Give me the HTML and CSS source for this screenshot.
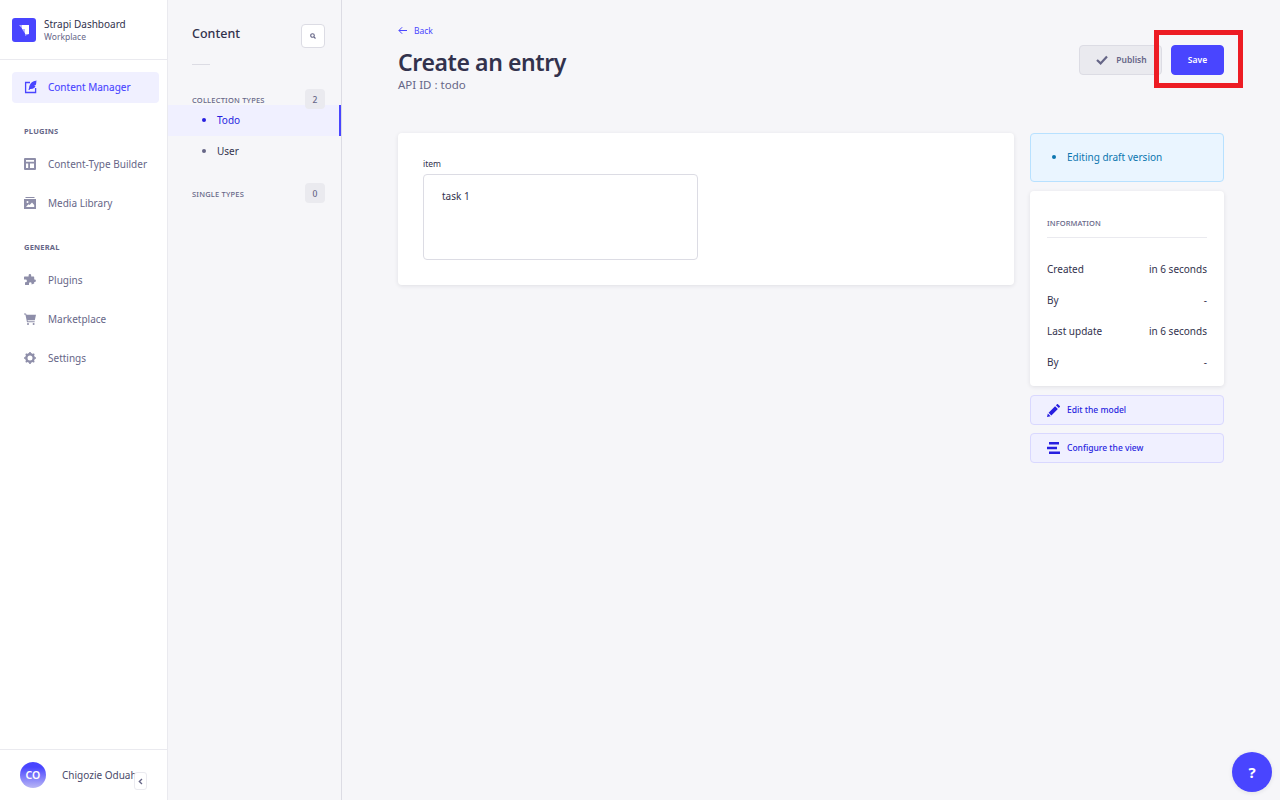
FILE: index.html
```html
<!DOCTYPE html>
<html lang="en">
<head>
  <meta charset="UTF-8" />
  <title>Create an entry</title>
  <link rel="stylesheet" href="styles.css">
</head>
<body>

  <aside class="sidebar">
    <div class="brand">
      <div class="brand-logo">
        <svg viewBox="0 0 24 24" width="24" height="24">
          <path d="M10 7h7v9h-4v-5h-3z" fill="#fff"/>
          <path d="M7 7h3v3.5zM10 11h3v4.5z" fill="#fff" opacity="0.6"/>
          <path d="M13 16h4l-4 2z" fill="#fff" opacity="0.5"/>
        </svg>
      </div>
      <div>
        <div class="brand-name">Strapi Dashboard</div>
        <div class="brand-sub">Workplace</div>
      </div>
    </div>

    <nav class="main-nav">
      <a class="nav-item active" href="#">
        <svg viewBox="0 0 14 14" width="14" height="14" fill="none">
          <path d="M6 2.5H1.6v10h10V8" stroke="#4945ff" stroke-width="1.3"/>
          <path d="M13.4.6C9.5.8 5.6 2.8 5 8.2l-.6 1.6 1 .3.7-1.2c3.2.2 5.2-1.2 5.4-3.2l-1.6-.2 2-.8c.4-1.2.5-2.4.5-4.1z" fill="#4945ff"/>
        </svg>
        Content Manager
      </a>

      <div class="nav-title plugins">Plugins</div>
      <a class="nav-item" href="#">
        <svg viewBox="0 0 12 12" width="12" height="12">
          <path d="M1 0h10a1 1 0 0 1 1 1v10a1 1 0 0 1-1 1H1a1 1 0 0 1-1-1V1a1 1 0 0 1 1-1zm1 2v1.8h8V2zm0 3.6V10h2.2V5.6zm4 0V10h4V5.6z" fill="#8e8ea9" fill-rule="evenodd"/>
        </svg>
        Content-Type Builder
      </a>
      <a class="nav-item" href="#">
        <svg viewBox="0 0 12 12" width="12" height="12">
          <path d="M1.5 0h9v1h-9zM0 2h12v10H0zm3.5 2a1 1 0 1 0 0 2 1 1 0 0 0 0-2zM2 10h8.2V8L8 5.6 5.6 8 4.4 7.2z" fill="#8e8ea9" fill-rule="evenodd"/>
        </svg>
        Media Library
      </a>

      <div class="nav-title general">General</div>
      <a class="nav-item" href="#">
        <svg viewBox="0 0 12 12" width="12" height="12">
          <path d="M4.6 2.6V1.4a1.3 1.3 0 0 1 2.6 0v1.2h2.4a.6.6 0 0 1 .6.6v2.2h.4a1.3 1.3 0 0 1 0 2.6h-.4v1.6l-2.6 1v-1a1.3 1.3 0 0 0-2.6 0v1.4H1.6a.6.6 0 0 1-.6-.6V8.2h.6a1.3 1.3 0 0 0 0-2.6H0V3.2a.6.6 0 0 1 .6-.6z" fill="#8e8ea9"/>
        </svg>
        Plugins
      </a>
      <a class="nav-item" href="#">
        <svg viewBox="0 0 12 12" width="12" height="12">
          <path d="M0 .4h2l.5 1.4H12l-1.2 5.4H3.5l.3 1h6.9v1H3L1.4 1.4H0z" fill="#8e8ea9"/>
          <circle cx="4" cy="11" r="1" fill="#8e8ea9"/>
          <circle cx="9.6" cy="11" r="1" fill="#8e8ea9"/>
        </svg>
        Marketplace
      </a>
      <a class="nav-item" href="#">
        <svg viewBox="0 0 12 12" width="12" height="12">
          <circle cx="6" cy="6" r="3.7" fill="none" stroke="#8e8ea9" stroke-width="2.4"/>
          <path d="M6 0v12M0 6h12M1.8 1.8l8.4 8.4M10.2 1.8l-8.4 8.4" stroke="#8e8ea9" stroke-width="1.6" stroke-dasharray="1.8 8.4 1.8"/>
        </svg>
        Settings
      </a>
    </nav>

    <div class="user-box">
      <div class="avatar">CO</div>
      <div class="user-name">Chigozie Oduah</div>
      <button class="collapse-btn">
        <svg viewBox="0 0 6 8" width="5" height="7" fill="none">
          <path d="M4.8 1 1.6 4l3.2 3" stroke="#666687" stroke-width="1.6"/>
        </svg>
      </button>
    </div>
  </aside>

  <aside class="subnav">
    <div class="subnav-head">
      <h2>Content</h2>
      <button class="search-btn">
        <svg viewBox="0 0 12 12" width="6" height="6" fill="none">
          <circle cx="5" cy="5" r="3.6" stroke="#666687" stroke-width="2.2"/>
          <path d="M7.6 7.6 11 11" stroke="#666687" stroke-width="2.4"/>
        </svg>
      </button>
    </div>
    <div class="subnav-rule"></div>

    <div class="section-head first">
      <span>Collection Types</span>
      <span class="count">2</span>
    </div>
    <a class="sub-item active" href="#"><i></i>Todo</a>
    <a class="sub-item" href="#"><i></i>User</a>

    <div class="section-head">
      <span>Single Types</span>
      <span class="count">0</span>
    </div>
  </aside>

  <main class="content">
    <a class="back" href="#">
      <svg viewBox="0 0 10 10" width="9" height="9" fill="none">
        <path d="M10 5H1.2M4.6 1.4 1 5l3.6 3.6" stroke="#4945ff" stroke-width="1.1"/>
      </svg>
      Back
    </a>

    <div class="page-head">
      <div>
        <h1>Create an entry</h1>
        <p>API ID : todo</p>
      </div>
      <div class="actions">
        <button class="btn publish">
          <svg viewBox="0 0 12 10" width="12" height="10" fill="none">
            <path d="M1 5l3.6 3.4L11 1.4" stroke="#666687" stroke-width="2.2"/>
          </svg>
          Publish
        </button>
        <button class="btn save">Save</button>
        <div class="highlight"></div>
      </div>
    </div>

    <div class="edit-grid">
      <section class="card form-card">
        <label for="item">item</label>
        <textarea id="item" class="field">task 1</textarea>
      </section>

      <div class="side">
        <div class="draft"><i></i>Editing draft version</div>

        <section class="card info">
          <h3>Information</h3>
          <div class="info-row first"><span>Created</span><span>in 6 seconds</span></div>
          <div class="info-row"><span>By</span><span>-</span></div>
          <div class="info-row"><span>Last update</span><span>in 6 seconds</span></div>
          <div class="info-row"><span>By</span><span>-</span></div>
        </section>

        <a class="side-link" href="#">
          <svg viewBox="0 0 14 14" width="13" height="13">
            <path d="M0 14l.9-3.9 3 3zM1.7 9.3l7-7 3 3-7 7zM9.6 1.4 10.8.2a.7.7 0 0 1 1 0l2 2a.7.7 0 0 1 0 1l-1.2 1.2z" fill="#271fe0"/>
          </svg>
          Edit the model
        </a>
        <a class="side-link tight" href="#">
          <svg viewBox="0 0 13 12" width="13" height="12">
            <path d="M2 0h10v2.4H2zM0 4.8h10v2.4H0zM2 9.6h11V12H2z" fill="#271fe0"/>
          </svg>
          Configure the view
        </a>
      </div>
    </div>
  </main>

  <button class="help">?</button>

</body>
</html>
```

FILE: styles.css
```css
* {
  box-sizing: border-box;
}

body {
  font-family: "Noto Sans", Arial, sans-serif;
  background-color: #f6f6f9;
  margin: 0;
  height: 800px;
  overflow: hidden;
  display: flex;
  color: #32324d;
}

a {
  text-decoration: none;
  color: inherit;
}

h1, h2, h3, p {
  margin: 0;
}

button {
  font-family: inherit;
  cursor: pointer;
}

/* main sidebar */
.sidebar {
  width: 168px;
  height: 800px;
  flex-shrink: 0;
  background-color: #fff;
  border-right: 1px solid #eaeaef;
  display: flex;
  flex-direction: column;
}

.brand {
  height: 60px;
  padding: 0 12px;
  display: flex;
  align-items: center;
  gap: 8px;
  border-bottom: 1px solid #eaeaef;
}

.brand-logo {
  width: 24px;
  height: 24px;
  background-color: #4945ff;
  border-radius: 3px;
}

.brand-logo svg {
  display: block;
}

.brand-name {
  font-size: 10px;
  line-height: 14px;
}

.brand-sub {
  font-size: 8.5px;
  line-height: 12px;
  color: #666687;
}

.main-nav {
  flex: 1;
  padding: 12px 8px 0 12px;
}

.nav-item {
  height: 31px;
  margin-bottom: 8px;
  padding: 0 0 1px 12px;
  display: flex;
  align-items: center;
  gap: 12px;
  font-size: 10px;
  color: #666687;
  border-radius: 4px;
}

.nav-item svg {
  flex-shrink: 0;
}

.nav-item.active {
  background-color: #f0f0ff;
  color: #4945ff;
  gap: 10px;
  margin-bottom: 0;
  -webkit-text-stroke: 0.1px #4945ff;
}

.nav-title {
  padding-left: 12px;
  font-size: 7.5px;
  line-height: 12px;
  font-weight: 700;
  letter-spacing: 0.2px;
  text-transform: uppercase;
  color: #666687;
}

.nav-title.plugins {
  margin-top: 22px;
  margin-bottom: 12px;
}

.nav-title.general {
  margin-top: 22px;
  margin-bottom: 12px;
}

.user-box {
  height: 51px;
  padding: 0 20px;
  display: flex;
  align-items: center;
  gap: 16px;
  border-top: 1px solid #eaeaef;
  position: relative;
}

.avatar {
  width: 26px;
  height: 26px;
  flex-shrink: 0;
  border-radius: 50%;
  background: linear-gradient(180deg, #4945ff 20%, #b9b7f5 100%);
  color: #fff;
  font-size: 10.5px;
  font-weight: 600;
  display: flex;
  align-items: center;
  justify-content: center;
}

.user-name {
  flex-shrink: 0;
  font-size: 10px;
  white-space: nowrap;
  color: #4a4a6a;
}

.collapse-btn {
  position: absolute;
  left: 134px;
  top: 22px;
  width: 13px;
  height: 18px;
  padding: 0;
  background-color: #fff;
  border: 1px solid #eaeaef;
  border-radius: 3px;
  display: flex;
  align-items: center;
  justify-content: center;
}

/* content sidebar */
.subnav {
  width: 174px;
  height: 800px;
  flex-shrink: 0;
  border-right: 1px solid #dcdce4;
}

.subnav-head {
  height: 48px;
  padding: 24px 16px 0 24px;
  display: flex;
  justify-content: space-between;
  align-items: center;
}

.subnav-head h2 {
  font-size: 12.5px;
  font-weight: 500;
  line-height: 18px;
  margin-top: -4px;
}

.search-btn {
  width: 24px;
  height: 24px;
  padding: 0;
  background-color: #fff;
  border: 1px solid #dcdce4;
  border-radius: 4px;
  display: flex;
  align-items: center;
  justify-content: center;
}

.subnav-rule {
  width: 18px;
  height: 1px;
  margin: 16px 0 0 24px;
  background-color: #dcdce4;
}

.section-head {
  height: 20px;
  padding: 0 16px 0 24px;
  display: flex;
  justify-content: space-between;
  font-size: 7.5px;
  font-weight: 500;
  letter-spacing: 0.2px;
  text-transform: uppercase;
  color: #666687;
  margin-top: 16px;
}

.section-head span:first-child {
  line-height: 22px;
}

.section-head.first {
  margin-top: 24px;
  margin-bottom: -4px;
}

.count {
  width: 20px;
  height: 20px;
  background-color: #eaeaef;
  border-radius: 4px;
  display: flex;
  align-items: center;
  justify-content: center;
  font-size: 8.5px;
  font-weight: 500;
}

.sub-item {
  height: 31px;
  padding: 0 0 1px 34px;
  display: flex;
  align-items: center;
  gap: 11px;
  font-size: 10px;
}

.sub-item i {
  width: 4px;
  height: 4px;
  border-radius: 50%;
  background-color: #666687;
}

.sub-item.active {
  background-color: #f0f0ff;
  color: #271fe0;
  border-right: 2px solid #4945ff;
}

.sub-item.active i {
  background-color: #271fe0;
}

/* page */
.content {
  flex: 1;
  padding: 24px 56px 0;
}

.back {
  height: 12px;
  display: flex;
  align-items: center;
  gap: 7px;
  font-size: 8.5px;
  color: #4945ff;
}

.page-head {
  margin-top: 9px;
  display: flex;
  justify-content: space-between;
}

.page-head h1 {
  font-size: 23px;
  letter-spacing: -0.4px;
  line-height: 34px;
  font-weight: 600;
}

.page-head p {
  font-size: 11.5px;
  line-height: 12px;
  color: #666687;
}

.actions {
  position: relative;
  display: flex;
  gap: 9px;
  align-items: flex-start;
}

.btn {
  height: 30px;
  padding-bottom: 2px;
  border-radius: 4px;
  font-size: 8.5px;
  font-weight: 600;
  display: flex;
  align-items: center;
  justify-content: center;
}

.publish {
  width: 83px;
  padding-left: 8px;
  gap: 8px;
  background-color: #eaeaef;
  border: 1px solid #dcdce4;
  color: #666687;
}

.save {
  width: 53px;
  background-color: #4945ff;
  border: 1px solid #4945ff;
  color: #fff;
}

.highlight {
  position: absolute;
  right: -19px;
  top: -15px;
  width: 89px;
  height: 58px;
  border: 5px solid #ed1c24;
  pointer-events: none;
}

.edit-grid {
  margin-top: 42px;
  display: grid;
  grid-template-columns: 1fr 194px;
  gap: 16px;
  align-items: start;
}

.card {
  background-color: #fff;
  border-radius: 4px;
  box-shadow: 0 1px 4px rgba(33, 33, 52, 0.1);
}

.form-card {
  height: 152px;
  padding: 24px 25px;
}

.form-card label {
  display: block;
  font-size: 8.5px;
  line-height: 12px;
  margin: 1px 0 4px;
}

.field {
  display: block;
  width: 275px;
  height: 86px;
  padding: 12px 18px;
  resize: none;
  border: 1px solid #dcdce4;
  border-radius: 4px;
  background-color: #fff;
  font-family: inherit;
  font-size: 10px;
  line-height: 18px;
  color: #32324d;
}

.side {
  display: flex;
  flex-direction: column;
}

.draft {
  height: 49px;
  padding: 0 0 2px 21px;
  display: flex;
  align-items: center;
  gap: 11px;
  background-color: #eaf5ff;
  border: 1px solid #b8e1ff;
  border-radius: 4px;
  font-size: 10px;
  color: #0c75af;
}

.draft i {
  width: 4px;
  height: 4px;
  border-radius: 50%;
  background-color: #0c75af;
}

.info {
  height: 195px;
  margin-top: 9px;
  padding: 24px 17px 0;
}

.info h3 {
  height: 23px;
  border-bottom: 1px solid #eaeaef;
  font-size: 7.5px;
  line-height: 16px;
  font-weight: 500;
  letter-spacing: 0.1px;
  text-transform: uppercase;
  color: #666687;
}

.info-row {
  height: 31px;
  display: flex;
  justify-content: space-between;
  align-items: center;
  font-size: 10px;
}

.info-row.first {
  margin-top: 15px;
}

.side-link {
  height: 30px;
  margin-top: 9px;
  padding: 0 0 2px 16px;
  display: flex;
  align-items: center;
  gap: 7px;
  background-color: #f0f0ff;
  border: 1px solid #d9d8ff;
  border-radius: 4px;
  font-size: 8.5px;
  font-weight: 500;
  color: #271fe0;
}

.side-link svg {
  margin-top: 2px;
}

.side-link.tight {
  margin-top: 8px;
}

.help {
  position: absolute;
  left: 1232px;
  top: 752px;
  width: 40px;
  height: 40px;
  border: none;
  border-radius: 50%;
  background-color: #4945ff;
  box-shadow: 0 1px 4px rgba(33, 33, 52, 0.1);
  color: #fff;
  font-size: 15px;
  font-weight: 700;
}
```
